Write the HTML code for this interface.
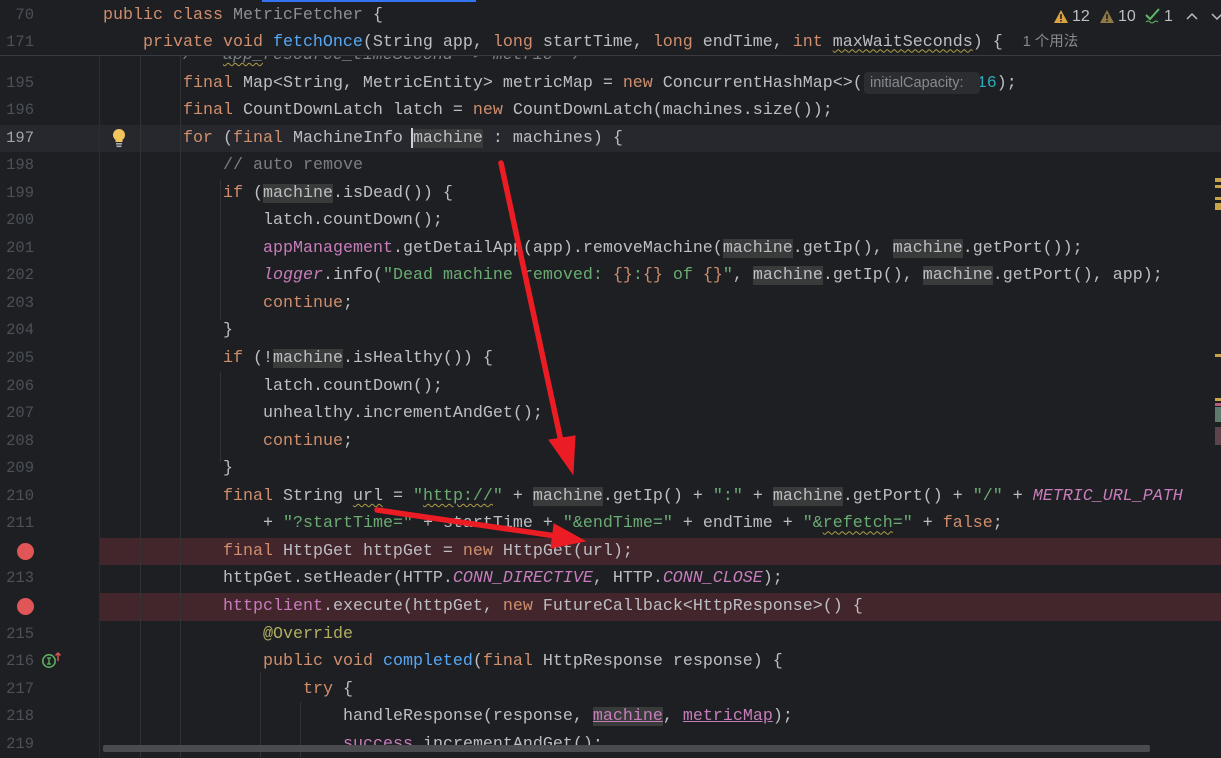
<!DOCTYPE html>
<html><head><meta charset="utf-8"><style>
body{margin:0;width:1221px;height:757px;background:#1e1f22;overflow:hidden;position:relative;font-family:"Liberation Mono",monospace;}
.l{position:absolute;height:27.55px;line-height:27.55px;font-size:16.67px;color:#bcbec4;white-space:pre;}
.num{position:absolute;left:0;width:34px;text-align:right;font-size:15.5px;color:#4b5059;font-family:"Liberation Mono",monospace;height:27.55px;line-height:27.55px;}
.k{color:#cf8e6d}.s{color:#6aab73}.f{color:#c77dbb}.fi{color:#c77dbb;font-style:italic}.c{color:#7a7e85}.ci{color:#7a7e85;font-style:italic}.n{color:#2aacb8}.fn{color:#56a8f5}.a{color:#b3ae60}
.m{background:#393b3a}
.u{text-decoration:underline wavy #b09e48;text-decoration-thickness:1px;text-underline-offset:3px}
.bg{position:absolute;left:100px;right:0;height:27.55px}
.g{position:absolute;width:1px;background:#313335}
.bp{position:absolute;left:17px;width:17px;height:17px;border-radius:50%;background:#e05555}
.st{position:absolute;top:7px;font-family:'Liberation Sans',sans-serif;font-size:16px;color:#bcbec4;line-height:20px}
</style></head><body>
<div class="bg" style="left:0;top:124.6px;background:#26282e"></div>
<div class="bg" style="top:537.9px;background:#43262b"></div>
<div class="bg" style="top:593px;background:#43262b"></div>
<div class="g" style="left:99px;top:56px;height:701px;background:#2b2d30"></div>
<div class="g" style="left:140px;top:56px;height:701px"></div>
<div class="g" style="left:180px;top:56px;height:701px"></div>
<div class="g" style="left:220px;top:180px;height:140px"></div>
<div class="g" style="left:220px;top:372px;height:90px"></div>
<div class="g" style="left:260px;top:672px;height:85px"></div>
<div class="g" style="left:300px;top:702px;height:55px"></div>

<div class="l" style="top:42px;left:183px;clip-path:inset(14px 0 0 0)"><span class="ci">/** <span class="u">app_</span>resource_timeSecond -&gt; metric */</span></div>

<div class="num" style="top:69.5px">195</div><div class="l" style="top:69.5px;left:183px"><span class="k">final</span> Map&lt;String, MetricEntity&gt; metricMap = <span class="k">new</span> ConcurrentHashMap&lt;&gt;(<span style="display:inline-block;width:114px"></span><span class="n">16</span>);</div>
<div style="position:absolute;left:864px;top:72px;width:116px;height:22px;background:#2b2d30;border-radius:4px;color:#868a91;font-family:'Liberation Sans',sans-serif;font-size:14.5px;line-height:22px;padding-left:6px;box-sizing:border-box">initialCapacity:</div>
<div class="num" style="top:97.05px">196</div><div class="l" style="top:97.05px;left:183px"><span class="k">final</span> CountDownLatch latch = <span class="k">new</span> CountDownLatch(machines.size());</div>
<div class="num" style="top:124.6px;color:#a1a3ab">197</div><div class="l" style="top:124.6px;left:183px"><span class="k">for</span> (<span class="k">final</span> MachineInfo <span class="m">machine</span> : machines) {</div>
<div style="position:absolute;left:411px;top:128px;width:2px;height:20px;background:#ced0d6"></div>
<svg style="position:absolute;left:111px;top:128px" width="16" height="20" viewBox="0 0 16 20"><path d="M8 1a6 6 0 0 0-3.5 10.9V14h7v-2.1A6 6 0 0 0 8 1z" fill="#f2c55c"/><rect x="5" y="15" width="6" height="1.6" fill="#a8abb0"/><rect x="5.5" y="17.5" width="5" height="1.6" fill="#a8abb0"/></svg>
<div class="num" style="top:152.15px">198</div><div class="l" style="top:152.15px;left:223px"><span class="c">// auto remove</span></div>
<div class="num" style="top:179.7px">199</div><div class="l" style="top:179.7px;left:223px"><span class="k">if</span> (<span class="m">machine</span>.isDead()) {</div>
<div class="num" style="top:207.25px">200</div><div class="l" style="top:207.25px;left:263px">latch.countDown();</div>
<div class="num" style="top:234.8px">201</div><div class="l" style="top:234.8px;left:263px"><span class="f">appManagement</span>.getDetailApp(app).removeMachine(<span class="m">machine</span>.getIp(), <span class="m">machine</span>.getPort());</div>
<div class="num" style="top:262.35px">202</div><div class="l" style="top:262.35px;left:263px"><span class="fi">logger</span>.info(<span class="s">"Dead machine removed: </span><span class="k">{}</span><span class="s">:</span><span class="k">{}</span><span class="s"> of </span><span class="k">{}</span><span class="s">"</span>, <span class="m">machine</span>.getIp(), <span class="m">machine</span>.getPort(), app);</div>
<div class="num" style="top:289.9px">203</div><div class="l" style="top:289.9px;left:263px"><span class="k">continue</span>;</div>
<div class="num" style="top:317.45px">204</div><div class="l" style="top:317.45px;left:223px">}</div>
<div class="num" style="top:345px">205</div><div class="l" style="top:345px;left:223px"><span class="k">if</span> (!<span class="m">machine</span>.isHealthy()) {</div>
<div class="num" style="top:372.55px">206</div><div class="l" style="top:372.55px;left:263px">latch.countDown();</div>
<div class="num" style="top:400.1px">207</div><div class="l" style="top:400.1px;left:263px">unhealthy.incrementAndGet();</div>
<div class="num" style="top:427.65px">208</div><div class="l" style="top:427.65px;left:263px"><span class="k">continue</span>;</div>
<div class="num" style="top:455.2px">209</div><div class="l" style="top:455.2px;left:223px">}</div>
<div class="num" style="top:482.75px">210</div><div class="l" style="top:482.75px;left:223px"><span class="k">final</span> String <span class="u">url</span> = <span class="s">"<span class="u">http://</span>"</span> + <span class="m">machine</span>.getIp() + <span class="s">":"</span> + <span class="m">machine</span>.getPort() + <span class="s">"/"</span> + <span class="fi">METRIC_URL_PATH</span></div>
<div class="num" style="top:510.3px">211</div><div class="l" style="top:510.3px;left:263px">+ <span class="s">"?startTime="</span> + startTime + <span class="s">"&amp;endTime="</span> + endTime + <span class="s">"&amp;<span class="u">refetch</span>="</span> + <span class="k">false</span>;</div>
<div class="bp" style="top:543px"></div><div class="l" style="top:537.85px;left:223px"><span class="k">final</span> HttpGet httpGet = <span class="k">new</span> HttpGet(url);</div>
<div class="num" style="top:565.4px">213</div><div class="l" style="top:565.4px;left:223px">httpGet.setHeader(HTTP.<span class="fi">CONN_DIRECTIVE</span>, HTTP.<span class="fi">CONN_CLOSE</span>);</div>
<div class="bp" style="top:598px"></div><div class="l" style="top:592.95px;left:223px"><span class="f">httpclient</span>.execute(httpGet, <span class="k">new</span> FutureCallback&lt;HttpResponse&gt;() {</div>
<div class="num" style="top:620.5px">215</div><div class="l" style="top:620.5px;left:263px"><span class="a">@Override</span></div>
<div class="num" style="top:648.05px">216</div><div class="l" style="top:648.05px;left:263px"><span class="k">public void</span> <span class="fn">completed</span>(<span class="k">final</span> HttpResponse response) {</div>
<svg style="position:absolute;left:41px;top:651px" width="22" height="18" viewBox="0 0 22 18"><circle cx="8" cy="10" r="6.2" fill="none" stroke="#5fb865" stroke-width="1.5"/><path d="M6 7h4M8 7v6M6 13h4" stroke="#5fb865" stroke-width="1.3"/><path d="M17 10V2M14.5 4.5 17 2l2.5 2.5" fill="none" stroke="#e05555" stroke-width="1.4"/></svg>
<div class="num" style="top:675.6px">217</div><div class="l" style="top:675.6px;left:303px"><span class="k">try</span> {</div>
<div class="num" style="top:703.15px">218</div><div class="l" style="top:703.15px;left:343px">handleResponse(response, <span class="f m" style="text-decoration:underline">machine</span>, <span class="f" style="text-decoration:underline">metricMap</span>);</div>
<div class="num" style="top:730.7px">219</div><div class="l" style="top:730.7px;left:343px"><span class="f" style="text-decoration:underline">success</span>.incrementAndGet();</div>

<div style="position:absolute;left:103px;top:745px;width:1047px;height:7px;background:#4a4b4e;border-radius:2px"></div>
<div style="position:absolute;left:1215px;top:178px;width:6px;height:4px;background:#c7a34a"></div>
<div style="position:absolute;left:1215px;top:185px;width:6px;height:3px;background:#c7a34a"></div>
<div style="position:absolute;left:1215px;top:197px;width:6px;height:3px;background:#c7a34a"></div>
<div style="position:absolute;left:1215px;top:203px;width:6px;height:7px;background:#c7a34a"></div>
<div style="position:absolute;left:1215px;top:354px;width:6px;height:3px;background:#c7a34a"></div>
<div style="position:absolute;left:1215px;top:398px;width:6px;height:3px;background:#c7a34a"></div>
<div style="position:absolute;left:1215px;top:403px;width:6px;height:3px;background:#b35c7a"></div>
<div style="position:absolute;left:1215px;top:407px;width:6px;height:15px;background:#5e7a6c"></div>
<div style="position:absolute;left:1215px;top:427px;width:6px;height:18px;background:#6a4d55;opacity:.8"></div>

<div style="position:absolute;left:0;top:0;width:1221px;height:55px;background:#1e1f22;border-bottom:1px solid #393b40"></div>
<div style="position:absolute;left:262px;top:0;width:214px;height:2px;background:#3574f0"></div>
<div class="num" style="top:2px">70</div><div class="l" style="top:2px;left:103px"><span class="k">public class</span> <span style="color:#8d8f95">MetricFetcher</span> {</div>
<div class="num" style="top:28.5px">171</div><div class="l" style="top:28.5px;left:143px"><span class="k">private void</span> <span class="fn">fetchOnce</span>(String app, <span class="k">long</span> startTime, <span class="k">long</span> endTime, <span class="k">int</span> <span class="u">maxWaitSeconds</span>) {  <span style="font-family:'Liberation Sans','Noto Sans CJK SC',sans-serif;font-size:14.5px;color:#868a91">1 个用法</span></div>
<svg style="position:absolute;left:1053px;top:9px" width="16" height="15" viewBox="0 0 16 15"><path d="M8 1 15 14H1z" fill="#d9a343"/><rect x="7.2" y="5" width="1.6" height="5" fill="#1e1f22"/><rect x="7.2" y="11" width="1.6" height="1.6" fill="#1e1f22"/></svg>
<div class="st" style="left:1072px">12</div>
<svg style="position:absolute;left:1099px;top:9px" width="16" height="15" viewBox="0 0 16 15"><path d="M8 1 15 14H1z" fill="#8f7a45"/><rect x="7.2" y="5" width="1.6" height="5" fill="#1e1f22"/><rect x="7.2" y="11" width="1.6" height="1.6" fill="#1e1f22"/></svg>
<div class="st" style="left:1118px">10</div>
<svg style="position:absolute;left:1145px;top:8px" width="16" height="17" viewBox="0 0 16 17"><path d="M1 7l4 4 9-10" fill="none" stroke="#5fb865" stroke-width="2"/><path d="M1 14q2-2 4 0t4 0 4 0" fill="none" stroke="#5fb865" stroke-width="1"/></svg>
<div class="st" style="left:1164px">1</div>
<svg style="position:absolute;left:1185px;top:11px" width="14" height="10" viewBox="0 0 14 10"><path d="M2 8 7 3l5 5" fill="none" stroke="#bcbec4" stroke-width="1.5"/></svg>
<svg style="position:absolute;left:1210px;top:11px" width="14" height="10" viewBox="0 0 14 10"><path d="M2 3l5 5 5-5" fill="none" stroke="#bcbec4" stroke-width="1.5"/></svg>

<svg style="position:absolute;left:0;top:0" width="1221" height="757">
<g stroke="#ec1c24" stroke-width="5.5" stroke-linecap="round" fill="#ec1c24">
<line x1="501" y1="163" x2="562" y2="446"/>
<path d="M549 440 L573 474 L575 436 Z" stroke-width="1"/>
<line x1="377" y1="510" x2="556" y2="536"/>
<path d="M554 524 L585 541 L551 548 Z" stroke-width="1"/>
</g></svg>
</body></html>
